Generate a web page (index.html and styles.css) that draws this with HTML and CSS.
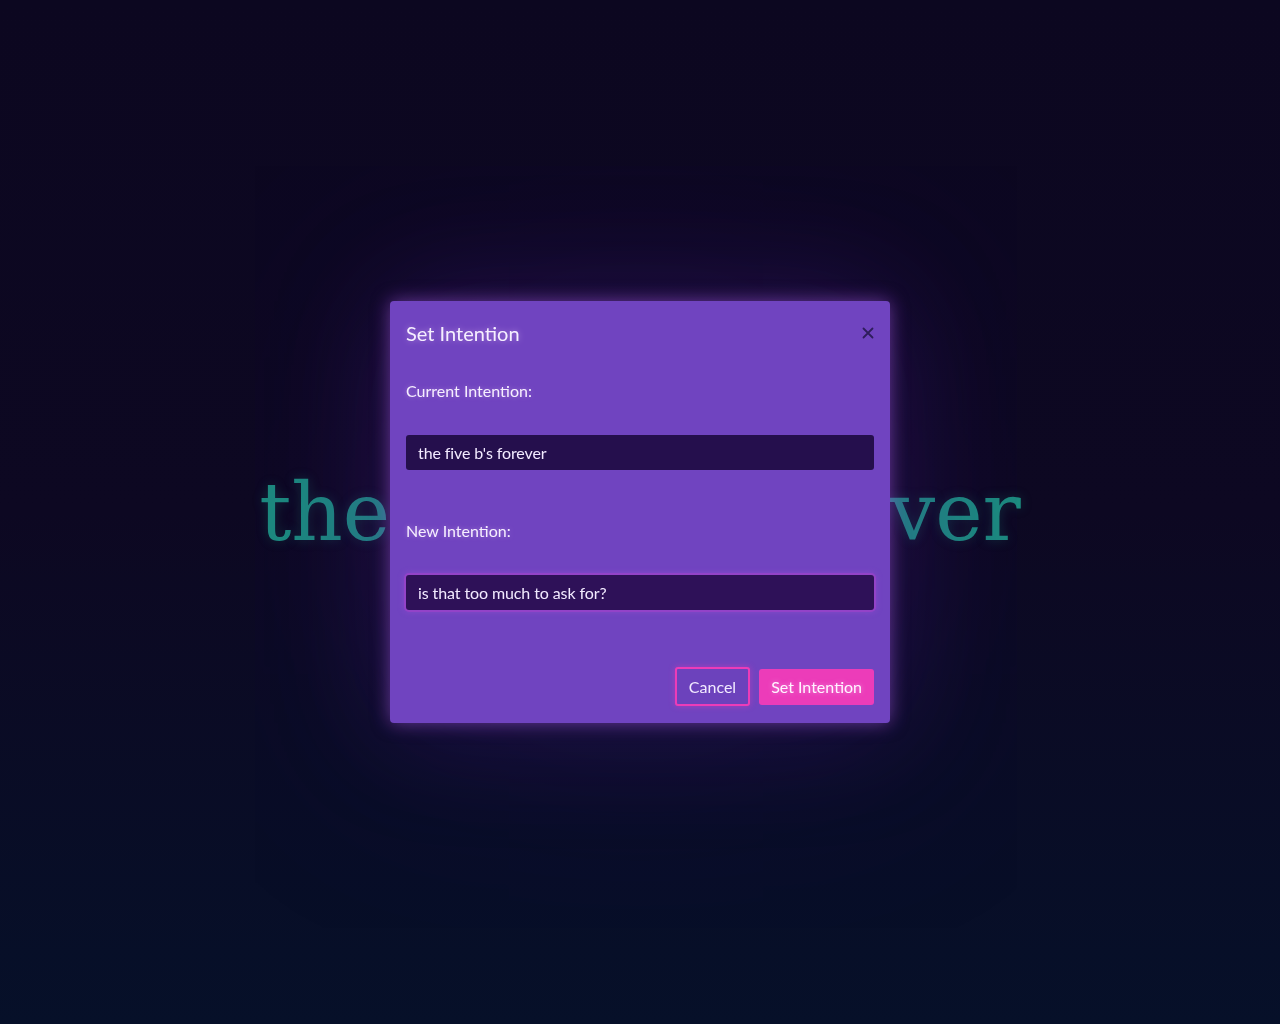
FILE: index.html
```html
<!DOCTYPE html>
<html lang="en">
<head>
<meta charset="utf-8">
<title>Set Intention</title>
<link rel="stylesheet" href="styles.css">
</head>
<body>
<main class="stage">
  <h1 class="intention">the five b's forever</h1>
</main>
<div class="overlay">
  <div class="modal" role="dialog" aria-labelledby="modal-title">
    <div class="modal-header">
      <h2 id="modal-title" class="modal-title">Set Intention</h2>
      <button class="close" aria-label="Close">
        <svg width="12" height="12" viewBox="0 0 12 12"><path d="M1.5 1.5 L10.5 10.5 M10.5 1.5 L1.5 10.5" stroke="currentColor" stroke-width="1.8" stroke-linecap="round"/></svg>
      </button>
    </div>
    <div class="field">
      <label class="label">Current Intention:</label>
      <div class="input input-current">the five b's forever</div>
    </div>
    <div class="field field-last">
      <label class="label">New Intention:</label>
      <div class="input input-new">is that too much to ask for?</div>
    </div>
    <div class="actions">
      <button class="btn btn-cancel">Cancel</button>
      <button class="btn btn-primary">Set Intention</button>
    </div>
  </div>
</div>
</body>
</html>
```
FILE: styles.css
```css
* { box-sizing: border-box; }
html, body { margin: 0; height: 100%; }
body {
  background: linear-gradient(180deg, #0c0720 0%, #0d0822 50%, #061029 100%);
  font-family: Lato, "Open Sans", sans-serif;
  overflow: hidden;
}
.stage {
  height: 100vh;
  display: flex;
  align-items: center;
  justify-content: center;
}
.intention {
  margin: 0;
  font-family: "DejaVu Serif", serif;
  font-weight: normal;
  font-size: 80px;
  color: #1c8c7f;
  text-shadow: 0 0 12px rgba(30, 160, 140, 0.25);
}
.overlay {
  position: fixed;
  inset: 0;
  display: flex;
  align-items: center;
  justify-content: center;
}
.modal {
  width: 500px;
  background: #7044c0;
  border-radius: 4px;
  padding: 20px 16px 17px;
  box-shadow: 0 0 18px rgba(170, 90, 230, 0.55), 0 0 120px rgba(90, 40, 170, 0.28), 0 0 260px rgba(70, 30, 140, 0.22);
  color: #f6efff;
}
.modal-header {
  display: flex;
  align-items: center;
  justify-content: space-between;
  margin-bottom: 34px;
}
.modal-title {
  margin: 0;
  font-size: 20px;
  font-weight: normal;
  line-height: 24px;
  text-shadow: 0 0 6px rgba(255, 220, 255, 0.45);
}
.close {
  background: none;
  border: 0;
  padding: 0;
  color: #2e1d5c;
  width: 12px;
  height: 12px;
  display: flex;
  align-items: center;
  justify-content: center;
}
.field { margin-bottom: 49px; }
.field-last { margin-bottom: 57px; }
.label {
  display: block;
  font-size: 16px;
  line-height: 24px;
  margin-bottom: 32px;
  text-shadow: 0 0 5px rgba(255, 220, 255, 0.35);
}
.input {
  height: 35px;
  border-radius: 3px;
  padding: 0 12px;
  font-size: 16px;
  line-height: 35px;
  color: #f2eaff;
  letter-spacing: -0.1px;
}
.input-current { background: #250f4d; }
.input-new {
  background: #2e1158;
  box-shadow: 0 0 0 2px #9343c8, 0 0 6px 2px rgba(170, 80, 220, 0.4);
}
.actions {
  display: flex;
  justify-content: flex-end;
  align-items: center;
  gap: 9px;
}
.btn {
  font-family: Lato, "Open Sans", sans-serif;
  font-size: 16px;
  border-radius: 3px;
  cursor: pointer;
}
.btn-cancel {
  height: 39px;
  padding: 0 12px;
  background: #6c42bc;
  border: 2px solid #ec3cb8;
  color: #f2eaff;
  box-shadow: 0 0 6px rgba(236, 60, 184, 0.45);
}
.btn-primary {
  height: 36px;
  padding: 0 12px;
  background: #ec3cb9;
  border: 0;
  color: #fff4ff;
  text-shadow: 0 0 5px rgba(255, 220, 255, 0.5);
}
```
